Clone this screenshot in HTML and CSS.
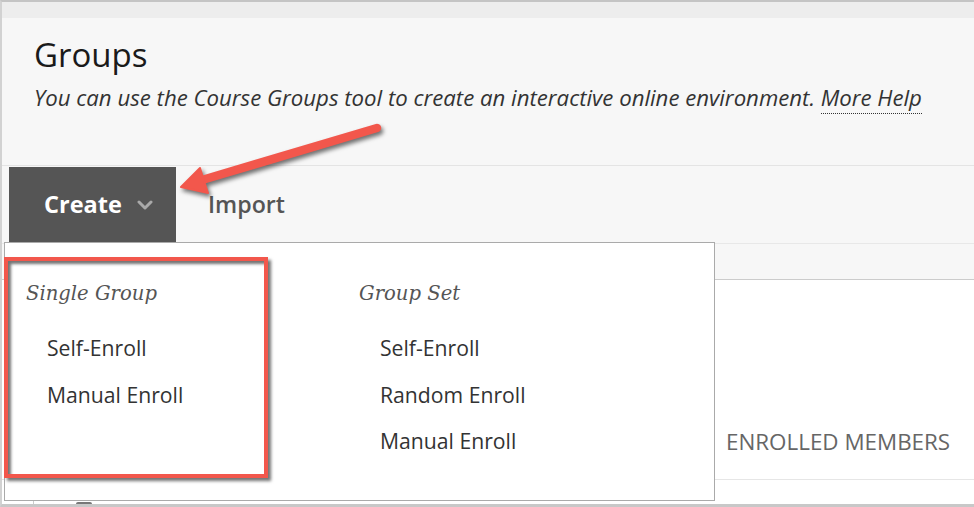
FILE: index.html
```html
<!DOCTYPE html>
<html lang="en">
<head>
<meta charset="utf-8">
<title>Groups</title>
<link rel="stylesheet" href="styles.css">
</head>
<body>
<div class="frame">
  <div class="topband"></div>
  <header class="header">
    <h1 class="title">Groups</h1>
    <p class="intro">You can use the Course Groups tool to create an interactive online environment. <a class="help" href="#">More Help</a></p>
  </header>
  <nav class="toolbar">
    <button class="btn-create">Create
      <svg class="chev" width="16" height="10" viewBox="0 0 16 10"><path d="M2 2 L8 8 L14 2" fill="none" stroke="#a9a9a9" stroke-width="3" stroke-linecap="round" stroke-linejoin="round"/></svg>
    </button>
    <button class="btn-import">Import</button>
  </nav>
  <div class="subbar"></div>
  <main class="content">
    <div class="table-head">
      <span class="col-enrolled">ENROLLED MEMBERS</span>
    </div>
    <div class="table-row">
      <span class="cell-check"></span>
    </div>
  </main>

  <div class="dropdown">
    <div class="menu-col">
      <div class="menu-heading">Single Group</div>
      <ul class="menu-list">
        <li>Self-Enroll</li>
        <li>Manual Enroll</li>
      </ul>
    </div>
    <div class="menu-col">
      <div class="menu-heading">Group Set</div>
      <ul class="menu-list">
        <li>Self-Enroll</li>
        <li>Random Enroll</li>
        <li>Manual Enroll</li>
      </ul>
    </div>
  </div>

  <div class="callout-box"></div>
  <svg class="callout-arrow" width="974" height="507" viewBox="0 0 974 507">
    <g class="arrow-shape">
      <line x1="202" y1="180" x2="377" y2="128" stroke="#f2574c" stroke-width="8.5" stroke-linecap="round"/>
      <path d="M181 187 L200 168 L204 181 L208 193 Z" fill="#f2574c" stroke="#f2574c" stroke-width="2" stroke-linejoin="round"/>
    </g>
  </svg>
</div>
</body>
</html>
```

FILE: styles.css
```css
* { box-sizing: border-box; }

html, body {
  margin: 0;
  padding: 0;
  background: #fff;
}

body {
  font-family: "Open Sans", "Liberation Sans", sans-serif;
  color: #333;
}

.frame {
  position: relative;
  width: 974px;
  height: 507px;
  overflow: hidden;
  display: flex;
  flex-direction: column;
  border-top: 2px solid #c4c4c4;
  border-left: 2px solid #d2d2d2;
  border-bottom: 3px solid #c8c8c8;
  background: #fff;
}

.topband {
  height: 16px;
  flex: none;
  background: #ededed;
}

.header {
  flex: none;
  height: 148px;
  background: #f7f7f7;
  border-bottom: 1px solid #e4e4e4;
  padding: 15px 0 0 32px;
}

.title {
  margin: 0;
  font-size: 33px;
  font-weight: 400;
  line-height: 44px;
  color: #1a1a1a;
}

.intro {
  margin: 6px 0 0;
  font-size: 22.2px;
  font-style: italic;
  line-height: 30px;
  color: #333;
}

.help {
  color: #333;
  text-decoration: none;
  border-bottom: 1px dotted #333;
}

.toolbar {
  flex: none;
  height: 77px;
  background: #f7f7f7;
  display: flex;
  align-items: flex-start;
  padding: 1px 0 0 7px;
}

.btn-create {
  height: 75px;
  width: 167px;
  border: 0;
  margin: 0;
  background: #555555;
  color: #fff;
  font-family: "Open Sans", "Liberation Sans", sans-serif;
  font-weight: 700;
  font-size: 23.5px;
  display: flex;
  align-items: center;
  padding: 0 0 2px 35px;
  gap: 15px;
}

.chev { display: block; margin-top: 3px; }

.btn-import {
  height: 75px;
  border: 0;
  margin: 0;
  background: transparent;
  color: #555;
  font-family: "Open Sans", "Liberation Sans", sans-serif;
  font-weight: 600;
  font-size: 23.2px;
  padding: 0 0 2px 32px;
}

.subbar {
  flex: none;
  height: 37px;
  background: #f7f7f7;
  border-top: 1px solid #e8e8e8;
  border-bottom: 1px solid #cccccc;
}

.content {
  flex: 1;
  background: #fff;
  display: flex;
  flex-direction: column;
}

.table-head {
  margin-top: 123px;
  height: 77px;
  border-bottom: 1px solid #e6e6e6;
  display: flex;
  align-items: center;
  padding-left: 724px;
  padding-top: 1px;
}

.col-enrolled {
  font-size: 22.4px;
  color: #666;
  white-space: nowrap;
}

.table-row {
  flex: 1;
  margin-left: 31px;
  border-left: 1px solid #cccccc;
  position: relative;
}

.cell-check {
  position: absolute;
  left: 42px;
  bottom: 0;
  width: 16px;
  height: 2px;
  background: #777;
  border-radius: 2px 2px 0 0;
}

/* dropdown menu overlays the page */
.dropdown {
  position: absolute;
  left: 2px;
  top: 240px;
  width: 711px;
  height: 259px;
  background: #fff;
  border: 1px solid #aaaaaa;
  display: flex;
  padding: 37px 0 0 21px;
}

.menu-col { width: 333px; }

.menu-heading {
  font-family: "DejaVu Serif", "Liberation Serif", serif;
  font-style: italic;
  font-size: 19.6px;
  color: #555;
  line-height: 28px;
}

.menu-list {
  list-style: none;
  margin: 17px 0 0;
  padding: 0 0 0 21px;
}

.menu-list li {
  font-size: 21.2px;
  line-height: 46.5px;
  color: #333;
}

/* annotations */
.callout-box {
  position: absolute;
  left: 2px;
  top: 255px;
  width: 264px;
  height: 221px;
  border: 4px solid #f2574c;
  box-shadow: 3px 3px 3px rgba(0,0,0,0.55), inset 3px 3px 3px rgba(0,0,0,0.55);
}

.callout-arrow {
  position: absolute;
  left: -2px;
  top: -2px;
  pointer-events: none;
}

.arrow-shape {
  filter: drop-shadow(2px 3px 2px rgba(0,0,0,0.55));
}
```
